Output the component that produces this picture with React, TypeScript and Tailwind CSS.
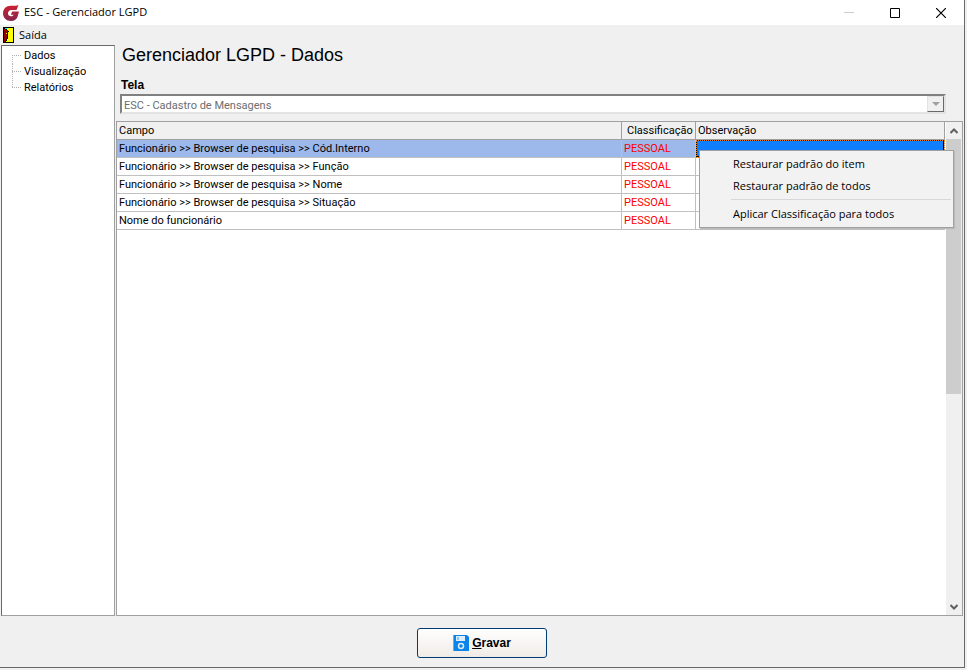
import React from 'react'

const treeItems = ['Dados', 'Visualização', 'Relatórios']

const rows = [
  'Funcionário >> Browser de pesquisa >> Cód.Interno',
  'Funcionário >> Browser de pesquisa >> Função',
  'Funcionário >> Browser de pesquisa >> Nome',
  'Funcionário >> Browser de pesquisa >> Situação',
  'Nome do funcionário',
]

function Logo() {
  return (
    <svg width="17" height="16" viewBox="0 0 17 16" aria-hidden="true">
      <defs>
        <linearGradient id="logo" x1="0" y1="0" x2="0" y2="1">
          <stop offset="0" stopColor="#cf2030" />
          <stop offset="1" stopColor="#84264f" />
        </linearGradient>
      </defs>
      <path
        fill="url(#logo)"
        d="M15.500 0 L13.500 5 H8.500 C6.500 5 5 6.300 5 8.200 C5 10 6.300 11.300 8 11.300 C9.300 11.300 10.300 10.700 10.700 9.800 H7.800 L9.200 6.600 H16 L14.800 11 C13.800 14.200 11.500 16 8 16 C3.300 16 0 12.800 0 8.300 C0 3.800 3.300 0.700 7.500 0.700 H12 C13.500 0.700 14.500 0.500 15.500 0 Z"
      />
    </svg>
  )
}

function DoorIcon() {
  return (
    <svg width="11" height="16" viewBox="0 0 11 16" shapeRendering="crispEdges" aria-hidden="true">
      <path fill="#000" d="M0 0H11V16H0Z" />
      <path fill="#ffff00" d="M4 1H10V15H3V14H4Z" />
      <path fill="#900000" d="M1 2H3V3H5V12H4V13H3V14H2V15H1Z" />
      <path fill="#00e0e0" d="M2 1H4V2H2Z" />
      <path fill="#000" d="M5 4H6V5H5ZM4 5H5V12H4V13H3V12H4Z" />
      <path fill="#ffff00" d="M3 6H4V7H3Z" />
    </svg>
  )
}

function DiskIcon() {
  return (
    <svg width="16" height="16" viewBox="0 0 16 16" aria-hidden="true">
      <path fill="#0a84e8" d="M0 0H14L16 2V16H0Z" />
      <path fill="#5fb0f2" d="M0 0H1V16H0Z" />
      <path fill="#dcedfb" d="M3 1H12V6H3Z" />
      <path fill="#8cc4f3" d="M4 2H6V5H4Z" />
      <circle cx="8" cy="11" r="2.500" fill="#0a84e8" stroke="#dcedfb" strokeWidth="1.500" />
    </svg>
  )
}

function TitleBar() {
  return (
    <header className="flex h-[25px] items-center bg-white pl-[3px] font-['Open_Sans','Noto_Sans',sans-serif] text-black">
      <Logo />
      <span className="ml-1 flex-1 pb-px whitespace-nowrap">ESC - Gerenciador LGPD</span>
      <button aria-label="Minimizar" className="flex h-full w-[46px] items-center justify-center">
        <svg width="10" height="10" shapeRendering="crispEdges"><path d="M0 4H10V5H0Z" fill="#ccc" /></svg>
      </button>
      <button aria-label="Maximizar" className="flex h-full w-[46px] items-center justify-center">
        <svg width="10" height="10"><path d="M.5 .5H9.500V9.500H.5Z" fill="none" stroke="#000" /></svg>
      </button>
      <button aria-label="Fechar" className="flex h-full w-[46px] items-center justify-center">
        <svg width="10" height="10"><path d="M0 0L10 10M10 0L0 10" stroke="#000" strokeWidth="1.200" /></svg>
      </button>
    </header>
  )
}

function Tree() {
  return (
    <nav className="w-[114px] shrink-0 border border-[#a0a0a0] border-t-[#696969] border-l-[#696969] bg-white pt-[2px] pl-[10px]">
      <ul>
        {treeItems.map((item, i) => (
          <li key={item} className="flex h-4 items-center">
            <svg width="10" height="16" shapeRendering="crispEdges" aria-hidden="true">
              <path d={i === 2 ? 'M.5 0V8' : i === 0 ? 'M.5 7V16' : 'M.5 0V16'} stroke="#b0b0b0" strokeDasharray="1 1" />
              <path d="M0 7.500H10" stroke="#b0b0b0" strokeDasharray="1 1" />
            </svg>
            <a href="#" className="ml-[2px]">{item}</a>
          </li>
        ))}
      </ul>
    </nav>
  )
}

function ContextMenu() {
  return (
    <div
      role="menu"
      className="absolute top-[10px] left-[3px] z-10 w-[255px] border border-[#a0a0a0] bg-[#f2f2f2] py-[2px] font-['Open_Sans','Noto_Sans',sans-serif] text-black shadow-[1px_1px_1px_#bbb]"
    >
      <button role="menuitem" className="flex h-[22px] w-full items-center pl-[33px]">Restaurar padrão do item</button>
      <button role="menuitem" className="flex h-[22px] w-full items-center pl-[33px]">Restaurar padrão de todos</button>
      <div role="separator" className="mt-[2px] mr-[2px] mb-[3px] ml-[31px] h-px bg-[#d7d7d7]" />
      <button role="menuitem" className="flex h-[22px] w-full items-center pl-[33px]">Aplicar Classificação para todos</button>
    </div>
  )
}

function Grid() {
  return (
    <table className="w-full table-fixed border-separate border-spacing-0">
      <colgroup>
        <col />
        <col className="w-[74px]" />
        <col className="w-[249px]" />
      </colgroup>
      <thead>
        <tr className="h-[18px] bg-[#f0f0f0] text-left">
          <th className="border-r border-b border-[#a0a0a0] p-0 pt-px pl-[2px] font-normal">Campo</th>
          <th className="border-r border-b border-[#a0a0a0] p-0 pt-px pl-[5px] font-normal">Classificação</th>
          <th className="border-r border-b border-[#a0a0a0] p-0 pt-px pl-[2px] font-normal">Observação</th>
        </tr>
      </thead>
      <tbody>
        {rows.map((row, i) => (
          <tr key={row} className={i === 0 ? 'h-[18px] bg-[#9db8eb]' : 'h-[18px] bg-white'}>
            <td className="border-r border-b border-[#c0c0c0] p-0 pt-px pl-[2px]">{row}</td>
            <td className="border-r border-b border-[#c0c0c0] p-0 pt-px pl-[2px] text-[#ff0000]">PESSOAL</td>
            {i === 0 ? (
              <td className="relative border-r border-b border-[#c0c0c0] bg-[#0f7fff] p-0 shadow-[inset_0_0_0_1px_#000] outline-1 -outline-offset-1 outline-dotted outline-[#f0800f]">
                <ContextMenu />
              </td>
            ) : (
              <td className="border-r border-b border-[#c0c0c0] p-0" />
            )}
          </tr>
        ))}
      </tbody>
    </table>
  )
}

function ScrollBar() {
  return (
    <div className="flex w-4 shrink-0 flex-col bg-[#f0f0f0]">
      <button aria-label="Rolar para cima" className="flex h-[17px] items-center justify-center">
        <svg width="8" height="6"><path d="M.5 5L4 1.500L7.500 5" fill="none" stroke="#606060" strokeWidth="2" /></svg>
      </button>
      <div className="flex-1">
        <div className="mr-px h-5/9 bg-[#cdcdcd]" />
      </div>
      <button aria-label="Rolar para baixo" className="flex h-[17px] items-center justify-center">
        <svg width="8" height="6"><path d="M.5 1L4 4.500L7.500 1" fill="none" stroke="#606060" strokeWidth="2" /></svg>
      </button>
    </div>
  )
}

export default function App() {
  return (
    <div className="flex h-screen flex-col bg-[#f0f0f0] pr-[2px] pb-[2px] font-[Roboto,'Liberation_Sans',sans-serif] text-[11px] leading-4 text-black">
      <div className="flex min-h-0 flex-1 flex-col border-r border-b border-[#696969]">
        <TitleBar />
        <div className="flex h-5 items-center pl-[3px] font-['Open_Sans','Noto_Sans',sans-serif]">
          <button className="flex items-center gap-[5px]"><DoorIcon />Saída</button>
        </div>
        <div className="flex min-h-0 flex-1 pl-px">
          <Tree />
          <main className="ml-px flex min-w-0 flex-1 flex-col">
            <h1 className="pl-[6px] font-['Liberation_Sans',Arial,sans-serif] text-[18px] leading-5">Gerenciador LGPD - Dados</h1>
            <label htmlFor="tela" className="mt-3 pl-[5px] font-['Liberation_Sans',Arial,sans-serif] text-[12px] leading-4 font-bold">Tela</label>
            <div className="mt-px mr-[18px] mb-[7px] ml-1 flex h-5 border-2 border-[#e3e3e3] border-t-[#808080] border-l-[#808080] bg-white">
              <select id="tela" disabled className="min-w-0 flex-1 appearance-none pt-[2px] pl-[2px] text-[#6d6d6d]">
                <option>ESC - Cadastro de Mensagens</option>
              </select>
              <span className="flex w-[17px] items-center justify-center border border-[#e3e3e3] border-r-[#696969] border-b-[#696969] bg-[#f0f0f0]">
                <svg width="8" height="4"><path d="M0 0H8L4 4Z" fill="#a0a0a0" /></svg>
              </span>
            </div>
            <section className="mr-px flex min-h-0 flex-1 border border-[#a0a0a0] bg-white">
              <div className="min-w-0 flex-1 pr-px"><Grid /></div>
              <ScrollBar />
            </section>
          </main>
        </div>
        <footer className="flex h-[51px] items-center justify-center pt-[2px]">
          <button className="flex h-[30px] w-[130px] items-center justify-center gap-[3px] rounded-[3px] border border-[#003c74] bg-linear-to-b from-white to-[#f0ebe6] font-['Liberation_Sans',Arial,sans-serif] text-[12px] font-bold">
            <DiskIcon />
            <span><u>G</u>ravar</span>
          </button>
        </footer>
      </div>
    </div>
  )
}
